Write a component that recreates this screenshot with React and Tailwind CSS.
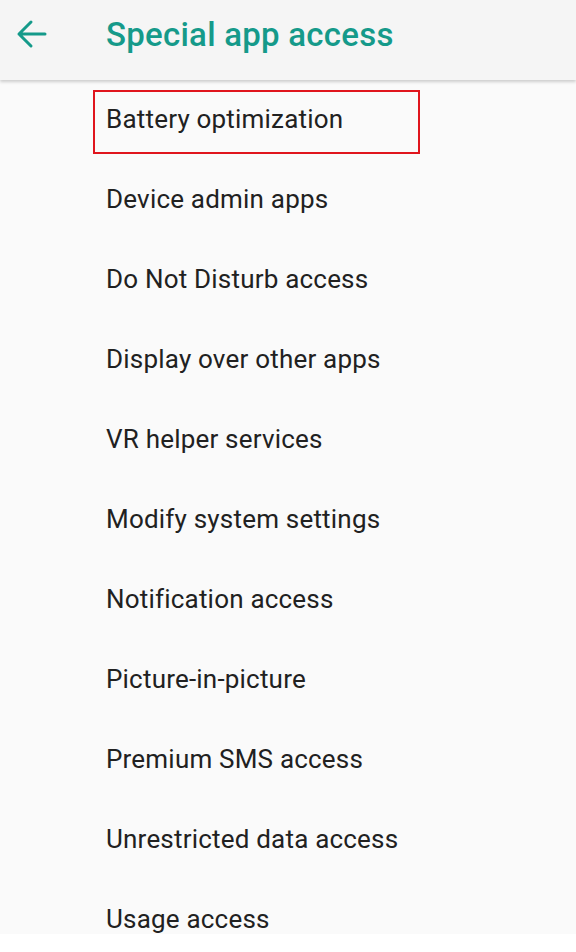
const items = [
  "Battery optimization",
  "Device admin apps",
  "Do Not Disturb access",
  "Display over other apps",
  "VR helper services",
  "Modify system settings",
  "Notification access",
  "Picture-in-picture",
  "Premium SMS access",
  "Unrestricted data access",
  "Usage access",
];

const App = () => {
  return (
    <div className="w-[576px] h-[952px] bg-white flex flex-col font-['Roboto',sans-serif]">
      <div className="h-[934px] overflow-hidden bg-[#fafafa] flex flex-col">
        {/* Toolbar */}
        <div className="relative z-10 h-[80px] shrink-0 bg-[#f5f5f5] flex items-center shadow-[0_2px_3px_rgba(0,0,0,0.18)]">
          <svg width="40" height="40" viewBox="0 0 40 40" className="ml-[12px] mt-[-13px] text-[#159a8a]">
            <path d="M7 20H33M19 8L7 20L19 32" fill="none" stroke="currentColor" strokeWidth="3" strokeLinecap="round" strokeLinejoin="round" />
          </svg>
          <p className="ml-[54px] mt-[-10px] text-[33px] font-medium text-[#159a8a] tracking-[0.25px]">
            Special app access
          </p>
        </div>

        {/* List */}
        <div className="flex flex-col">
          {items.map((label, i) => (
            <div key={label} className="relative h-[80px] shrink-0 flex items-center pl-[106px]">
              {i === 0 && (
                <div className="absolute left-[93px] top-[10px] w-[327px] h-[64px] border-2 border-[#e0151d]"></div>
              )}
              <p className="text-[26px] text-[#212121] tracking-[0.2px] mt-[-1px]">{label}</p>
            </div>
          ))}
        </div>
      </div>
    </div>
  );
};

export default App;
